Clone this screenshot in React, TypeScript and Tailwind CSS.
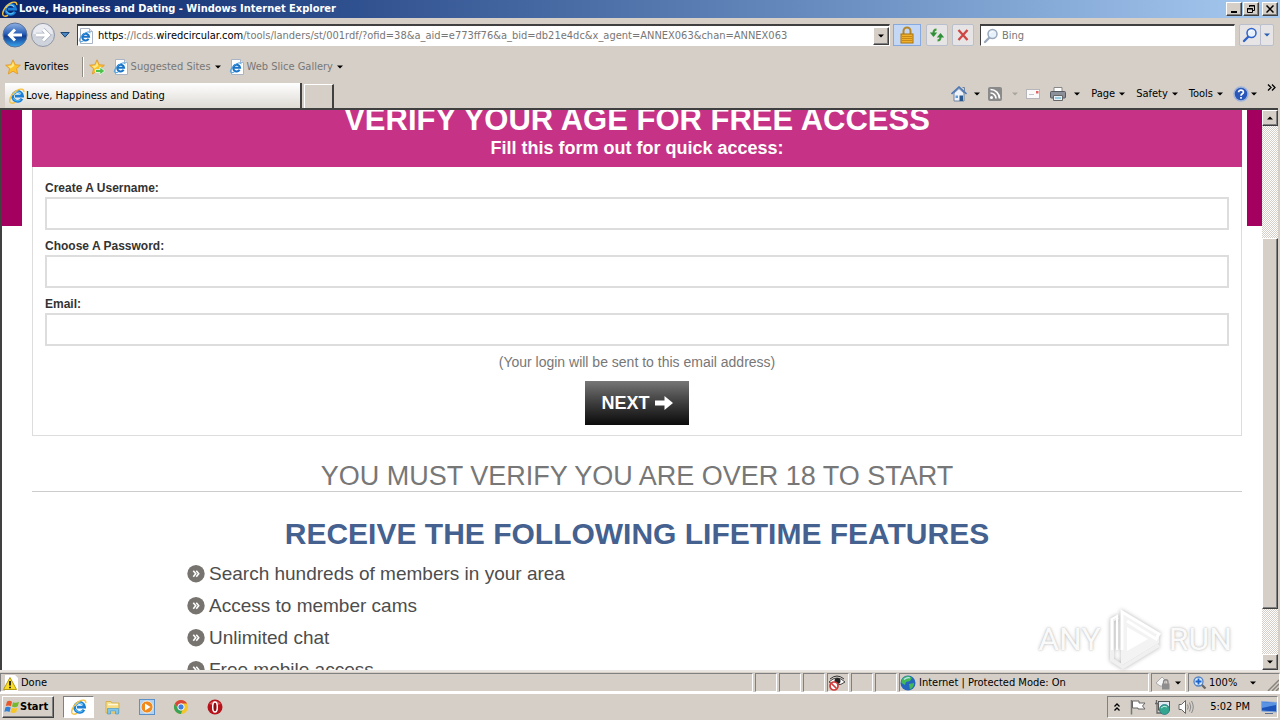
import { useState } from 'react';

const raised =
  'border border-t-white border-l-white border-r-[#404040] border-b-[#404040] bg-[#d5cfc7] shadow-[inset_-1px_-1px_0_#808080]';
const sunken = 'border border-t-[#808080] border-l-[#808080] border-r-white border-b-white';

function IeIcon({ className = 'size-4' }: { className?: string }) {
  return (
    <svg viewBox="0 0 16 16" className={`${className} shrink-0`} aria-hidden="true">
      <path d="M13 10.8A5 4.9 0 1 1 13.6 8.2H6" fill="none" stroke="#1b7fd6" strokeWidth="2.8" />
      <path d="M4.2 7A4.6 4.6 0 0 1 12 5.6" fill="none" stroke="#8edcfb" strokeWidth="1.1" />
      <path d="M4.3 10.3A4.6 4.6 0 0 0 11.6 11.6" fill="none" stroke="#56bff2" strokeWidth="1.1" />
      <path
        d="M14.8 4.2C15.3 1 12 .2 8 2.4C3.8 4.8 .4 9.8 .7 13.2C.9 15.7 3.6 15.6 6 14.3"
        fill="none"
        stroke="#f5c242"
        strokeWidth="1.4"
      />
    </svg>
  );
}

function PageIcon() {
  return (
    <svg viewBox="0 0 16 16" className="size-4 shrink-0" aria-hidden="true">
      <path d="M2.5 .5H11.5L14.5 3.5V15.5H2.5Z" fill="#fff" stroke="#a9b4c4" />
      <path d="M11.5 .5V3.5H14.5" fill="#dfe8f2" stroke="#a9b4c4" />
      <path d="M10.6 10.8A3.4 3.4 0 1 1 11 8.7H5" fill="none" stroke="#1b74c8" strokeWidth="2.1" />
      <path d="M12.3 5.2C12.3 3 8.5 3.6 5 6.5C1.5 9.5 .2 13.5 2.6 13.8C3.6 13.9 4.8 13.4 5.6 12.8" fill="none" stroke="#3f9be0" strokeWidth="1" />
    </svg>
  );
}

function Caret({ className = 'text-black' }: { className?: string }) {
  return (
    <svg viewBox="0 0 6 4" className={`h-1 w-1.5 shrink-0 ${className}`} aria-hidden="true">
      <path d="M0 .5H6L3 3.5Z" fill="currentColor" />
    </svg>
  );
}

function Star({ add = false }: { add?: boolean }) {
  return (
    <svg viewBox="0 0 16 16" className="size-4 shrink-0" aria-hidden="true">
      <path
        d="M8 .8L10.2 5.7L15.4 6.2L11.5 9.7L12.7 15L8 12.2L3.3 15L4.5 9.7L.6 6.2L5.8 5.7Z"
        fill="#fbc22c"
        stroke="#e0952a"
        strokeWidth=".8"
      />
      <path d="M8 3L9.4 6.7L5.5 9.5L3 7L6.5 6.6Z" fill="#ffe98a" />
      {add && <path d="M6.5 10.5H11V8L15.8 12L11 15.8V13.5H6.5Z" fill="#4fc04a" stroke="#f1fff0" strokeWidth=".8" />}
    </svg>
  );
}

function Lens({ color = '#2f62c8' }: { color?: string }) {
  return (
    <svg viewBox="0 0 16 16" className="size-4 shrink-0" aria-hidden="true">
      <path d="M6.5 9.5L2 14" stroke={color} strokeWidth="2.4" strokeLinecap="round" />
      <circle cx="9.5" cy="6" r="4.5" fill="#e6f1fc" stroke={color} strokeWidth="1.5" />
      <path d="M7.2 5.5A2.6 2.6 0 0 1 10 3.6" stroke="#fff" fill="none" />
    </svg>
  );
}

function TitleBar() {
  return (
    <header className="flex h-[18px] shrink-0 items-center gap-px bg-linear-to-r from-[#0a246a] to-[#a6caf0] pr-0.5 pl-0.5">
      <IeIcon />
      <span className="flex-1 font-[Tahoma,'DejaVu_Sans_Condensed','DejaVu_Sans',sans-serif] text-[11px] font-bold text-white">
        Love, Happiness and Dating - Windows Internet Explorer
      </span>
      <button aria-label="Minimize" className={`flex h-3.5 w-4 items-end justify-center pb-0.5 ${raised}`}>
        <span className="h-0.5 w-1.5 bg-black" />
      </button>
      <button aria-label="Restore" className={`flex h-3.5 w-4 items-center justify-center ${raised}`}>
        <svg viewBox="0 0 10 10" className="size-2.5" aria-hidden="true">
          <path d="M3.5 3V1.5H8.5V6.5H7M3 2H9M1.5 4.5H6.5V8.5H1.5ZM1 5H7" fill="none" stroke="#000" />
        </svg>
      </button>
      <button aria-label="Close" className={`ml-0.5 flex h-3.5 w-4 items-center justify-center ${raised}`}>
        <svg viewBox="0 0 8 8" className="size-2" aria-hidden="true">
          <path d="M.5 .5L7.5 7.5M7.5 .5L.5 7.5" stroke="#000" strokeWidth="1.5" />
        </svg>
      </button>
    </header>
  );
}

function AddressBar() {
  const [editing, setEditing] = useState(false);
  const [url, setUrl] = useState(
    'https://lcds.wiredcircular.com/tools/landers/st/001rdf/?ofid=38&a_aid=e773ff76&a_bid=db21e4dc&x_agent=ANNEX063&chan=ANNEX063'
  );
  const [, scheme, sub, domain, path] = url.match(/^(\w+)(:\/\/\w+\.)([^/]+)(.*)$/) ?? ['', '', url, '', ''];

  return (
    <div className="flex h-[22px] flex-1 items-center border border-t-2 border-t-[#404040] border-l-[#404040] border-r-white border-b-white bg-white">
      <PageIcon />
      <div className="relative ml-1 flex flex-1 items-center">
        <input
          aria-label="Address"
          value={url}
          onChange={(e) => setUrl(e.target.value)}
          onFocus={() => setEditing(true)}
          onBlur={() => setEditing(false)}
          className={`w-full outline-none ${editing ? 'text-black' : 'text-transparent'}`}
        />
        {!editing && (
          <div aria-hidden="true" className="pointer-events-none absolute inset-0 flex items-center overflow-hidden whitespace-nowrap text-[#777]">
            <span className="text-black">{scheme}</span>
            <span>{sub}</span>
            <span className="text-black">{domain}</span>
            <span>{path}</span>
          </div>
        )}
      </div>
      <button aria-label="Show addresses" className={`flex h-[18px] w-4 items-center justify-center ${raised}`}>
        <Caret />
      </button>
    </div>
  );
}

function NavRow() {
  const tool = 'flex h-[22px] items-center justify-center rounded-xs border border-[#b9bfcc] bg-[#e6e4e4]';
  return (
    <div className="flex h-[34px] shrink-0 items-center pr-1.5 pl-0.5">
      <button aria-label="Back">
        <svg viewBox="0 0 26 26" className="size-[26px]" aria-hidden="true">
          <defs>
            <linearGradient id="back" x1="0" y1="0" x2="0" y2="1">
              <stop offset="0" stopColor="#8fb2e2" />
              <stop offset=".45" stopColor="#2a5fb8" />
              <stop offset=".55" stopColor="#123c90" />
              <stop offset="1" stopColor="#39a7f0" />
            </linearGradient>
          </defs>
          <circle cx="13" cy="13" r="12" fill="url(#back)" stroke="#5c7399" />
          <path d="M20 13H8M13 7.5L7.5 13L13 18.500" fill="none" stroke="#fff" strokeWidth="3" />
        </svg>
      </button>
      <button aria-label="Forward" className="ml-0.5">
        <svg viewBox="0 0 26 26" className="size-[26px]" aria-hidden="true">
          <circle cx="13" cy="13" r="11.5" fill="#cfd3dc" stroke="#9097a5" />
          <path d="M3 12A10 10 0 0 1 23 12Z" fill="#e9ebf1" />
          <path d="M6 13H18M13 7.5L18.5 13L13 18.5" fill="none" stroke="#a9aebb" strokeWidth="4.4" />
          <path d="M6 13H18M13 7.5L18.5 13L13 18.5" fill="none" stroke="#fff" strokeWidth="3" />
        </svg>
      </button>
      <button aria-label="Recent pages" className="mr-[7px] ml-1">
        <svg viewBox="0 0 10 6" className="h-1.5 w-2.5" aria-hidden="true">
          <path d="M.8 .5H9.2L5 5.2Z" fill="#4b86c0" stroke="#1e4675" />
        </svg>
      </button>
      <AddressBar />
      <button aria-label="Security report" className="ml-[3px] flex h-[22px] w-7 items-center justify-center border border-[#86a9e0] bg-[#c4d8f5]">
        <svg viewBox="0 0 16 18" className="h-[18px] w-4" aria-hidden="true">
          <path d="M4.5 9V5A3.5 3.5 0 0 1 11.5 5V9" fill="none" stroke="#b5862a" strokeWidth="2" />
          <rect x="2" y="8" width="12" height="9" fill="#efb02e" stroke="#a87311" />
          <path d="M3 10.5H13M3 12.5H13M3 14.5H13" stroke="#c98a15" />
        </svg>
      </button>
      <button aria-label="Refresh" className={`ml-[5px] w-[22px] ${tool}`}>
        <svg viewBox="0 0 16 16" className="size-4" aria-hidden="true">
          <path d="M7.5 2.5C5.5 2.5 4.5 3.5 4.5 6M8.5 13.5C10.5 13.5 11.5 12.5 11.5 10" fill="none" stroke="#3d9a3d" strokeWidth="2" />
          <path d="M.8 5.500H8.2L4.5 10ZM7.800 10.500H15.2L11.5 6Z" fill="#2f8f36" />
        </svg>
      </button>
      <button aria-label="Stop" className={`ml-1 w-[22px] ${tool}`}>
        <svg viewBox="0 0 12 12" className="size-3" aria-hidden="true">
          <path d="M1.5 1L10.5 11M10.5 1L1.5 11" stroke="#cf4545" strokeWidth="2.3" />
        </svg>
      </button>
      <div className="ml-1.5 flex h-[22px] w-[255px] items-center border border-t-2 border-t-[#404040] border-l-[#404040] border-r-white border-b-white bg-white pl-0.5">
        <Lens color="#9aa9bd" />
        <input aria-label="Search" placeholder="Bing" className="ml-[3px] w-full outline-none placeholder:text-[#777]" />
      </div>
      <button aria-label="Search" className={`ml-1 w-[22px] ${tool}`}>
        <Lens />
      </button>
      <button aria-label="Search options" className={`-ml-px w-[14px] ${tool}`}>
        <Caret className="text-[#2a5fb4]" />
      </button>
    </div>
  );
}

function FavoritesRow() {
  return (
    <div className="flex h-[29px] shrink-0 items-center pl-[5px]">
      <button className="flex items-center gap-[3px]">
        <Star />
        Favorites
      </button>
      <div className="mr-[5px] ml-[13px] h-5 w-0.5 border-l border-[#8f8b85] bg-white" />
      <button aria-label="Add to Favorites Bar">
        <Star add />
      </button>
      <button className="ml-2 flex items-center gap-0.5 text-[#777]">
        <PageIcon />
        Suggested Sites
        <Caret className="ml-0.5 text-black" />
      </button>
      <button className="ml-2 flex items-center gap-0.5 text-[#777]">
        <PageIcon />
        Web Slice Gallery
        <Caret className="ml-0.5 text-black" />
      </button>
    </div>
  );
}

function TabRow() {
  return (
    <div className="flex h-[27px] shrink-0 items-end pr-1 pl-[5px]">
      <button className="flex h-[25px] w-[297px] items-center gap-px border-r-2 border-[#404040] bg-linear-to-b from-white to-[#dedad4] pl-1 text-left">
        <IeIcon />
        Love, Happiness and Dating
      </button>
      <button aria-label="New tab" className="ml-0.5 h-6 w-[30px] border-t border-r-2 border-l border-t-white border-r-[#404040] border-l-white" />
      <div className="flex h-7 flex-1 items-center justify-end">
        <button aria-label="Home" className="flex items-center gap-[7px]">
          <svg viewBox="0 0 16 16" className="size-4" aria-hidden="true">
            <path d="M3 7V15H13V7L8 2.5Z" fill="#eef3fa" stroke="#7084a0" />
            <path d="M.5 8L8 1L15.5 8" fill="none" stroke="#4d79b8" strokeWidth="1.6" />
            <path d="M11.5 1.5H13.5V5" stroke="#7084a0" fill="none" />
            <path d="M8.5 9.5H12V15H8.5Z" fill="#29588f" />
            <path d="M4.5 9.5H7V12H4.5Z" fill="#5e9bd8" />
          </svg>
          <Caret />
        </button>
        <button aria-label="Feeds" className="ml-[7px] flex items-center gap-[9px]">
          <svg viewBox="0 0 16 16" className="size-4" aria-hidden="true">
            <rect x="1" y="1" width="14" height="14" rx="2" fill="#8a8a8a" />
            <circle cx="4.5" cy="11.5" r="1.5" fill="#fff" />
            <path d="M3.5 7A5.5 5.5 0 0 1 9 12.5M3.5 3.5A9 9 0 0 1 12.5 12.5" fill="none" stroke="#fff" strokeWidth="1.7" />
          </svg>
          <Caret className="text-[#aaa59d]" />
        </button>
        <button aria-label="Read mail" className="ml-[7px]">
          <svg viewBox="0 0 16 16" className="size-4" aria-hidden="true">
            <rect x="1.5" y="3.5" width="13" height="9" fill="#fafafa" stroke="#b5b5ba" />
            <rect x="11" y="5" width="2.5" height="2.5" fill="#d66" />
            <path d="M4 8.5H9" stroke="#c4c4c8" />
          </svg>
        </button>
        <button aria-label="Print" className="ml-2 flex items-center gap-[7px]">
          <svg viewBox="0 0 18 16" className="h-4 w-[18px]" aria-hidden="true">
            <path d="M5 6V1.5H13V6" fill="#fff" stroke="#888" />
            <rect x="1.5" y="5.5" width="15" height="6.5" rx="1" fill="#8b9099" stroke="#555a63" />
            <path d="M4.5 9.5H13.5V14.5H4.5Z" fill="#e7f0f5" stroke="#666" />
            <path d="M6 12H12" stroke="#4ca5c8" />
          </svg>
          <Caret />
        </button>
        {['Page', 'Safety', 'Tools'].map((name) => (
          <button key={name} className="ml-[11px] flex items-center gap-1">
            {name}
            <Caret />
          </button>
        ))}
        <button aria-label="Help" className="ml-2.5 flex items-center gap-0.5">
          <svg viewBox="0 0 16 16" className="size-4" aria-hidden="true">
            <circle cx="8" cy="8" r="7" fill="#2a58b8" stroke="#9fb4dd" strokeWidth="1.5" />
            <path d="M5.6 6.2C5.6 3.3 10.5 3.4 10.4 6.2C10.3 7.8 8 7.8 8 9.7M8 11V12.7" fill="none" stroke="#fff" strokeWidth="1.7" />
          </svg>
          <Caret />
        </button>
        <button aria-label="More commands" className="ml-2.5 self-start pt-1">
          <svg viewBox="0 0 9 7" className="h-[7px] w-[9px]" aria-hidden="true">
            <path d="M1 .5L4 3.5L1 6.5M5 .5L8 3.5L5 6.5" fill="none" stroke="#000" strokeWidth="1.3" />
          </svg>
        </button>
      </div>
    </div>
  );
}

function Field({ id, label, type }: { id: string; label: string; type: string }) {
  return (
    <div className="mb-[7px]">
      <label htmlFor={id} className="block text-xs leading-[18px] font-bold text-[#333]">
        {label}
      </label>
      <input id={id} name={id} type={type} className="block h-[33px] w-full border-2 border-[#ddd] bg-white px-2 text-sm" />
    </div>
  );
}

const features = ['Search hundreds of members in your area', 'Access to member cams', 'Unlimited chat', 'Free mobile access'];

function LandingPage() {
  return (
    <div className="flex min-w-0 flex-1 items-start overflow-hidden bg-white font-['Liberation_Sans',Arial,sans-serif]">
      <div className="h-[116px] w-5 shrink-0 bg-[#a3005f]" />
      <main className="mr-[5px] ml-2.5 flex-1">
        <div className="flex h-[57px] flex-col justify-end overflow-hidden bg-[#c63386] pb-[9px] text-center font-bold text-white">
          <h1 className="text-[31px] leading-9">VERIFY YOUR AGE FOR FREE ACCESS</h1>
          <p className="text-lg leading-5">Fill this form out for quick access:</p>
        </div>
        <form onSubmit={(e) => e.preventDefault()} className="border border-t-0 border-[#ddd] px-3 pt-3 pb-2.5 text-center">
          <div className="text-left">
            <Field id="username" label="Create A Username:" type="text" />
            <Field id="password" label="Choose A Password:" type="password" />
            <Field id="email" label="Email:" type="email" />
          </div>
          <p className="text-sm leading-[18px] text-[#777]">(Your login will be sent to this email address)</p>
          <button
            type="submit"
            className="mt-2.5 inline-flex h-11 items-center gap-[5px] bg-linear-to-b from-[#777] to-[#0c0c0c] px-4 align-top text-lg font-bold text-white"
          >
            NEXT
            <svg viewBox="0 0 18 14" className="h-3.5 w-[18px]" aria-hidden="true">
              <path d="M0 4.5H9.5V0L18 7L9.5 14V9.5H0Z" fill="#fff" />
            </svg>
          </button>
        </form>
        <h2 className="mt-[26px] border-b border-[#ccc] text-center text-[27px] leading-[29px] text-[#777]">
          YOU MUST VERIFY YOU ARE OVER 18 TO START
        </h2>
        <h2 className="mt-[25px] text-center text-[30px] leading-[34px] font-bold text-[#44618f]">
          RECEIVE THE FOLLOWING LIFETIME FEATURES
        </h2>
        <ul className="mt-[7px] px-[155px] text-[19px] leading-8 text-[#4d4d4d]">
          {features.map((item) => (
            <li key={item} className="flex items-center gap-1">
              <svg viewBox="0 0 18 18" className="size-[18px]" aria-hidden="true">
                <circle cx="9" cy="8.7" r="8.7" fill="#77736f" />
                <path d="M6.3 5.7L8.7 8.7L6.3 11.7M9.3 5.7L11.7 8.700L9.3 11.7" fill="none" stroke="#fff" strokeWidth="1.6" />
              </svg>
              {item}
            </li>
          ))}
        </ul>
      </main>
      <div className="h-[116px] w-[15px] shrink-0 bg-[#a3005f]" />
    </div>
  );
}

function Scrollbar() {
  return (
    <div className="flex w-4 shrink-0 flex-col bg-[repeating-conic-gradient(#d5cfc7_0_25%,#fff_0_50%)] bg-size-[2px_2px]">
      <button aria-label="Scroll up" className={`flex h-4 items-center justify-center ${raised}`}>
        <Caret className="rotate-180" />
      </button>
      <div className="flex-[112]" />
      <div className={`flex-[371] ${raised}`} />
      <div className="flex-[45]" />
      <button aria-label="Scroll down" className={`flex h-4 items-center justify-center ${raised}`}>
        <Caret />
      </button>
    </div>
  );
}

function Watermark() {
  return (
    <div className="pointer-events-none absolute right-[46px] bottom-0 flex items-center gap-1.5 font-[Roboto,'Liberation_Sans',sans-serif] text-[32px] text-[#fafafa] [text-shadow:0_0_2px_#b5b5b5,0_0_4px_#ddd]">
      ANY
      <svg viewBox="0 0 56 62" className="h-[62px] w-14 drop-shadow-[0_0_2px_#b5b5b5]" aria-hidden="true">
        <path d="M14 4L52 27V35L14 58Z" fill="#f3f3f3" />
        <path d="M20 19L41 31L20 43Z" fill="#fff" />
        <path d="M15 42V4L52 26L49 31L20 13" fill="none" stroke="#fff" strokeWidth="3" />
        <path d="M11 9L5 12V52L16 59L52 37" fill="none" stroke="#f0f0f0" strokeWidth="4" />
        <path d="M5 42V11L10 8V42" fill="none" stroke="#fff" strokeWidth="2" />
      </svg>
      RUN
    </div>
  );
}

function StatusBar() {
  return (
    <footer className="flex h-6 shrink-0 items-stretch gap-0.5 border-t-2 border-b-2 border-t-[#e9e6e1] border-b-white pt-px">
      <div className={`flex flex-1 items-center gap-0.5 pl-0.5 ${sunken}`}>
        <svg viewBox="0 0 16 16" className="size-4" aria-hidden="true">
          <path d="M2 0H12L15 3V16H2Z" fill="#fff" />
          <path d="M7 2.5L13.5 14.5H.5Z" fill="#f8dc28" stroke="#b59a10" />
          <path d="M7 6V10.5M7 11.8V13.3" stroke="#000" strokeWidth="1.6" />
        </svg>
        Done
      </div>
      <div className={`w-[22px] ${sunken}`} />
      <div className={`w-[22px] ${sunken}`} />
      <div className={`w-[22px] ${sunken}`} />
      <div className={`flex w-[22px] items-center ${sunken}`}>
        <svg viewBox="0 0 18 16" className="h-4 w-[18px]" aria-label="Privacy report">
          <path d="M1 7Q9-1 17 7Q9 13 1 7Z" fill="#fff" stroke="#444" />
          <path d="M2 4Q9-2 16 4" fill="none" stroke="#333" />
          <circle cx="9.5" cy="6" r="3" fill="#222" />
          <circle cx="6" cy="11" r="4" fill="#fff" stroke="#d23b3b" strokeWidth="1.7" />
          <path d="M3.5 8.5L8.5 13.5" stroke="#d23b3b" strokeWidth="1.7" />
        </svg>
      </div>
      <div className={`w-[22px] ${sunken}`} />
      <div className={`w-[22px] ${sunken}`} />
      <div className={`flex w-[250px] items-center gap-[3px] ${sunken}`}>
        <svg viewBox="0 0 16 16" className="size-4" aria-hidden="true">
          <circle cx="8" cy="8" r="7.5" fill="#2466bd" />
          <path d="M3 3Q8-1 12 3L10 6L6 7L5 10L1.5 8Q1 5 3 3ZM9 9L14 8Q14 12 10 14.5Z" fill="#45b85a" />
          <path d="M4 4.500Q7 2 10 3" stroke="#bfe6ff" fill="none" strokeWidth="1.3" />
        </svg>
        Internet | Protected Mode: On
      </div>
      <button aria-label="Protected mode settings" className={`flex w-[35px] items-center gap-1 pl-[3px] ${sunken}`}>
        <svg viewBox="0 0 16 16" className="size-4" aria-hidden="true">
          <path d="M1 8L7 2L10 5V11H5Z" fill="#f4f4f4" stroke="#aaa" />
          <path d="M8.5 9V7A2 2 0 0 1 13 7V9" fill="none" stroke="#888" strokeWidth="1.3" />
          <rect x="7" y="8.5" width="7.5" height="6" fill="#8d8d8d" />
        </svg>
        <Caret />
      </button>
      <button className={`flex w-[92px] items-center gap-px pl-[3px] ${sunken}`}>
        <svg viewBox="0 0 16 16" className="size-4" aria-hidden="true">
          <path d="M9 9L13.5 13.5" stroke="#666" strokeWidth="2.2" />
          <circle cx="6.5" cy="6.5" r="4.5" fill="#d8ebfb" stroke="#5383c4" strokeWidth="1.3" />
          <path d="M6.5 3.5V9.5M3.5 6.5H9.5" stroke="#1d63c8" strokeWidth="1.8" />
        </svg>
        100%
        <Caret className="ml-3" />
        <svg viewBox="0 0 12 12" className="ml-auto size-3 self-end" aria-hidden="true">
          <path d="M1 12L12 1M5 12L12 5M9 12L12 9" stroke="#88847e" strokeWidth="1.5" />
        </svg>
      </button>
    </footer>
  );
}

function Taskbar() {
  return (
    <nav className="flex h-[26px] shrink-0 items-center pr-0.5 pl-0.5">
      <button className={`flex h-[22px] w-[52px] items-center pl-px font-[Tahoma,'DejaVu_Sans_Condensed','DejaVu_Sans',sans-serif] text-[11px] font-bold ${raised}`}>
        <svg viewBox="0 0 16 16" className="size-4 shrink-0" aria-hidden="true">
          <path d="M3 2.5Q5.5 1 8 2.8L7 7.3Q4.5 5.8 1.8 7Z" fill="#e8582c" />
          <path d="M9 3.2Q12 4.7 15 2.8L13.8 7.3Q11 9 8 7.6Z" fill="#76b82e" />
          <path d="M1.5 8.2Q4.2 7 6.7 8.5L5.5 13Q3 11.5 .3 12.7Z" fill="#3180d8" />
          <path d="M7.7 8.8Q10.5 10.3 13.5 8.5L12.3 13Q9.5 14.8 6.5 13.3Z" fill="#f8c624" />
        </svg>
        Start
      </button>
      <button aria-label="Internet Explorer" className={`ml-[9px] flex h-[22px] w-[31px] items-center justify-center bg-white ${sunken}`}>
        <IeIcon />
      </button>
      <button aria-label="Windows Explorer" className="ml-[11px]">
        <svg viewBox="0 0 16 16" className="size-4" aria-hidden="true">
          <path d="M1 2.5H6L7 4H14V14H1Z" fill="#f6dc86" stroke="#d4b254" />
          <path d="M3 5.5H13" stroke="#fff8d8" strokeWidth="1.5" />
          <path d="M2.5 15V9.5H13.5V15H10.5V12H5.5V15Z" fill="#7fc4ea" stroke="#4d9cc9" strokeWidth=".7" />
        </svg>
      </button>
      <button aria-label="Media Player" className="ml-[18px]">
        <svg viewBox="0 0 16 16" className="size-4" aria-hidden="true">
          <rect x=".5" y=".5" width="15" height="15" fill="#b4d2ef" stroke="#5b90c9" />
          <circle cx="8" cy="8" r="6" fill="#f08a1e" stroke="#fff" strokeWidth=".7" />
          <path d="M6 4.5L11.5 8L6 11.5Z" fill="#fff" />
        </svg>
      </button>
      <button aria-label="Chrome" className="ml-[18px]">
        <svg viewBox="0 0 16 16" className="size-4" aria-hidden="true">
          <circle cx="8" cy="8" r="7" fill="#f4c62a" />
          <path d="M1.9 4.5A7 7 0 0 1 14.1 4.5H8L5 9.8Z" fill="#d9453a" />
          <path d="M1.9 4.5L5 9.8L9.5 10.5L8 15A7 7 0 0 1 1.9 4.5Z" fill="#3ba355" />
          <circle cx="8" cy="8" r="3.2" fill="#3f7fe0" stroke="#fff" />
        </svg>
      </button>
      <button aria-label="Opera" className="ml-[18px]">
        <svg viewBox="0 0 16 16" className="size-4" aria-hidden="true">
          <circle cx="8" cy="8" r="7.5" fill="#b5121b" />
          <path d="M2 5Q8-1 14 5Q8 7 2 5Z" fill="#e2545a" />
          <ellipse cx="8" cy="8" rx="2.3" ry="5" fill="#8d0c13" stroke="#fff" strokeWidth="1.5" />
        </svg>
      </button>
      <div className={`ml-auto flex h-[22px] items-center pl-[5px] ${sunken}`}>
        <svg viewBox="0 0 8 10" className="h-2.5 w-2" aria-label="Show hidden icons">
          <path d="M1.5 4.5L4 2L6.5 4.5M1.5 8.5L4 6L6.5 8.5" fill="none" stroke="#000" strokeWidth="1.3" />
        </svg>
        <svg viewBox="0 0 16 16" className="ml-[9px] size-4" aria-label="Action Center">
          <path d="M1.5 1V15.5" stroke="#777" strokeWidth="1.5" />
          <path d="M2.5 2H9V4H15L12.5 7L15 10H8V9H2.5Z" fill="#fff" stroke="#666" />
        </svg>
        <svg viewBox="0 0 16 16" className="ml-2 size-4" aria-label="Network">
          <rect x="4.5" y="2.5" width="11" height="8.5" fill="#dfeaf3" stroke="#555" />
          <path d="M2.5 1V4M1 4.5H5M3 5V14H8" fill="none" stroke="#666" strokeWidth="1.3" />
          <circle cx="10.5" cy="10.5" r="5" fill="#34a58e" stroke="#1b6f80" strokeWidth=".7" />
          <path d="M7 9Q10 6 13 8" stroke="#bfeee0" fill="none" />
        </svg>
        <svg viewBox="0 0 16 16" className="ml-2 size-4" aria-label="Volume">
          <path d="M1 5.5H3.5L7.5 1.5V14.5L3.5 10.5H1Z" fill="#fff" stroke="#666" />
          <path d="M9.5 5.5Q11 8 9.5 10.5M11.5 3.5Q14 8 11.5 12.5M13.5 2Q17 8 13.5 14" fill="none" stroke="#888" />
        </svg>
        <span className="ml-4">5:02 PM</span>
        <svg viewBox="0 0 16 16" className="ml-[11px] size-4" aria-label="Show desktop">
          <path d="M.5 2.5L15.5 3.5V13L.5 12Z" fill="#1c53b8" stroke="#86a8dd" />
          <path d="M1 3L15 4V6L1 9Z" fill="#5a93e4" />
          <path d="M4 14.5H12" stroke="#5a6f92" />
        </svg>
      </div>
    </nav>
  );
}

export default function App() {
  return (
    <div className="flex h-screen flex-col overflow-hidden bg-[#d5cfc7] font-[Tahoma,'DejaVu_Sans_Condensed','Noto_Sans',sans-serif] text-[11px] leading-4 text-black">
      <TitleBar />
      <NavRow />
      <FavoritesRow />
      <TabRow />
      <div className="relative mr-0.5 flex min-h-0 flex-1 border-t-2 border-l-2 border-[#404040]">
        <LandingPage />
        <Scrollbar />
        <Watermark />
      </div>
      <StatusBar />
      <Taskbar />
    </div>
  );
}
